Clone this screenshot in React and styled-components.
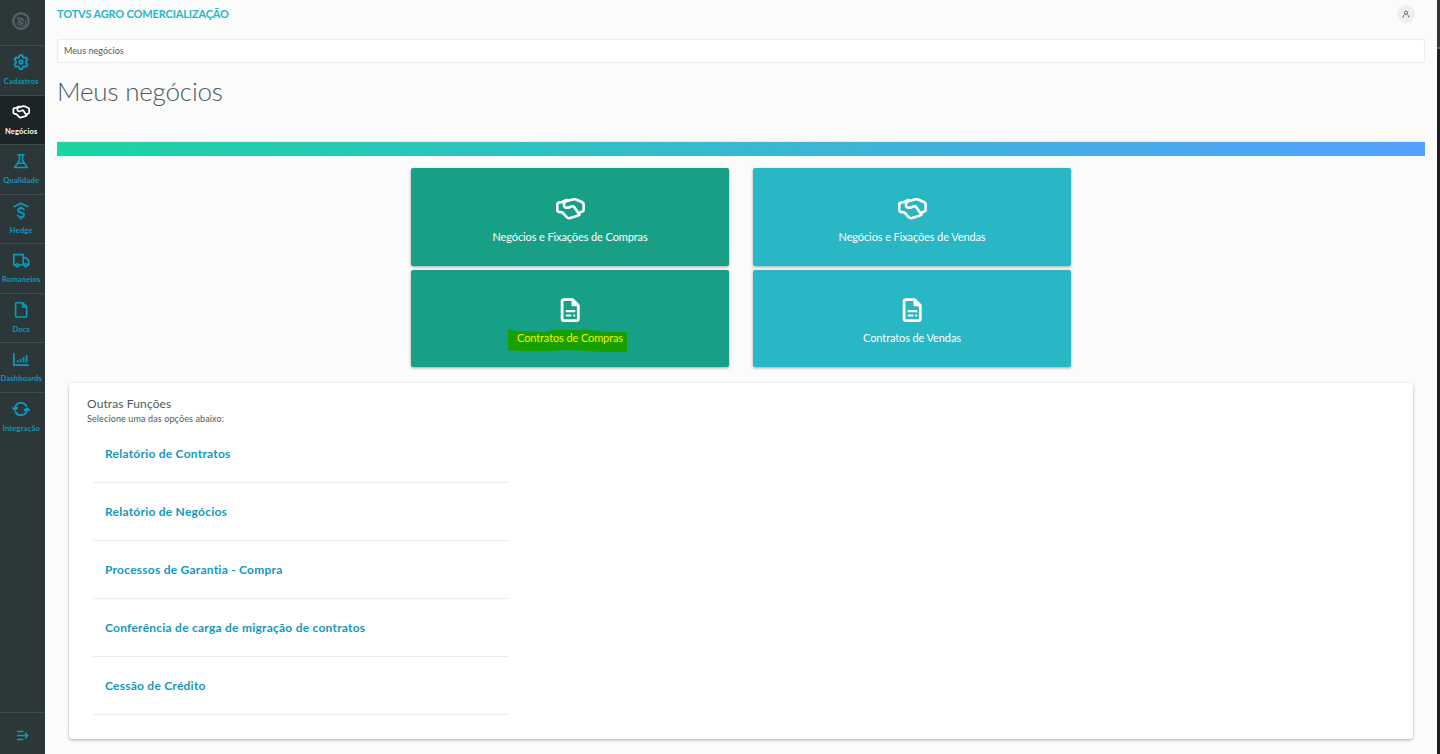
import React from 'react';
import styled, { createGlobalStyle } from 'styled-components';

const GlobalStyle = createGlobalStyle`
  * {
    box-sizing: border-box;
  }
  body {
    margin: 0;
    overflow: hidden;
    background: #fbfbfb;
    font-family: Lato, 'Open Sans', sans-serif;
    color: #4a5c60;
  }
`;

const Page = styled.div`
  display: flex;
  width: 100%;
  height: 754px;
`;

const Sidebar = styled.nav`
  display: flex;
  flex-direction: column;
  flex: none;
  width: 45px;
  background: #2c3739;
`;
const Brand = styled.div`
  display: flex;
  align-items: center;
  justify-content: center;
  height: 46px;
  padding: 0 3px 3px 0;
  border-bottom: 1px solid #3f4c4f;
`;
const MenuItem = styled.a`
  display: flex;
  flex-direction: column;
  align-items: center;
  height: 49.5px;
  padding: 7px 3px 0 0;
  border-bottom: 1px solid ${p => (p.$last ? 'transparent' : '#3f4c4f')};
  color: ${p => (p.$active ? '#ffffff' : '#0c9abe')};
  background: ${p => (p.$active ? '#1d2426' : 'transparent')};
  svg {
    flex: none;
    width: 18px;
    height: 18px;
  }
`;
const MenuLabel = styled.span`
  margin-top: 6.4px;
  padding-left: 0.5px;
  font-size: 7.5px;
  line-height: 10px;
  font-weight: 700;
  letter-spacing: 0.2px;
  white-space: nowrap;
`;
const Collapse = styled.div`
  display: flex;
  align-items: center;
  justify-content: center;
  height: 42px;
  margin-top: auto;
  padding-top: 4px;
  border-top: 1px solid #3f4c4f;
  color: #0c9abe;
`;

const Main = styled.main`
  flex: 1;
  min-width: 0;
  padding: 0 12px;
`;
const Header = styled.header`
  display: flex;
  align-items: center;
  justify-content: space-between;
  height: 28px;
  padding-right: 10px;
`;
const Product = styled.span`
  padding-bottom: 2px;
  font-size: 11px;
  font-weight: 700;
  letter-spacing: -0.15px;
  color: #29b6c5;
`;
const Avatar = styled.span`
  display: flex;
  align-items: center;
  justify-content: center;
  width: 18px;
  height: 18px;
  border-radius: 50%;
  background: #eeeeee;
`;
const Breadcrumb = styled.div`
  height: 24px;
  margin-top: 11px;
  padding-left: 6px;
  border: 1px solid #ececec;
  border-radius: 2px;
  background: #fff;
  font-size: 9px;
  line-height: 22px;
  letter-spacing: 0.05px;
`;
const Title = styled.h1`
  height: 36px;
  margin: 10px 0 0;
  font-size: 26px;
  font-weight: 300;
  line-height: 36px;
  letter-spacing: -0.2px;
`;
const Gradient = styled.div`
  height: 15px;
  margin-top: 32px;
  border-top: 1px solid #eeeeee;
  background: linear-gradient(90deg, #1dd3a1, #549fff) padding-box;
`;

const Cards = styled.div`
  display: grid;
  grid-template-columns: 318px 318px;
  grid-template-rows: 98px 97px;
  justify-content: center;
  gap: 4px 24px;
  margin-top: 12px;
`;
const Card = styled.a`
  display: flex;
  flex-direction: column;
  align-items: center;
  padding-top: ${p => p.$top}px;
  border-radius: 2px;
  background: ${p => p.$color};
  color: #fff;
  box-shadow: 0 1px 3px rgba(0, 0, 0, 0.35);
`;
const CardLabel = styled.span`
  position: relative;
  z-index: 0;
  margin-top: ${p => p.$gap}px;
  font-size: 11px;
  line-height: 14px;
  letter-spacing: -0.11px;
  color: ${p => (p.$marked ? '#f2f200' : '#fff')};
`;
const Marker = styled.svg`
  position: absolute;
  z-index: -1;
  left: 50%;
  top: -2px;
  margin-left: -62px;
`;

const Panel = styled.section`
  height: 356px;
  margin: 16px 12px 0;
  padding: 13px 18px 0;
  border-radius: 3px;
  background: #fff;
  box-shadow: 0 1px 3px rgba(0, 0, 0, 0.32);
`;
const PanelTitle = styled.h2`
  margin: 0;
  font-size: 12px;
  font-weight: 400;
  line-height: 16px;
  letter-spacing: 0.12px;
`;
const PanelHint = styled.p`
  margin: 1px 0 0;
  font-size: 9px;
  line-height: 12px;
  letter-spacing: 0.12px;
`;
const List = styled.ul`
  width: 416px;
  margin: 0 0 0 6px;
  padding: 0;
  list-style: none;
`;
const ListItem = styled.li`
  height: 58px;
  padding: 19px 12px 0;
  border-bottom: 1px solid #ececec;
  color: #1397bd;
  font-size: 12px;
  font-weight: 700;
  line-height: 20px;
  letter-spacing: 0.24px;
`;

const Edge = styled.aside`
  flex: none;
  width: 3px;
  border-top: 47px solid #333333;
  background: #1f1f23;
`;
const EdgeNotch = styled.div`
  height: 2px;
  background: #66666a;
`;

const Icon = ({ size = 18, width = 1.9, box = 20, children }) => (
  <svg
    width={size}
    height={size}
    viewBox={`0 0 ${box} ${box}`}
    fill="none"
    stroke="currentColor"
    strokeWidth={width}
    strokeLinejoin="round"
    strokeLinecap="round"
  >
    {children}
  </svg>
);

const Gear = () => (
  <Icon width={2}>
    <path d="M7.900 4.600 8.500 2.400h3l.6 2.200 1.300.8 2.300-.6 1.600 2.700L15.700 9.200v1.900l1.600 1.600-1.600 2.700-2.300-.6-1.300.8-.6 2.200h-3l-.6-2.200-1.300-.8-2.300.6-1.600-2.700 1.600-1.600V9.200L2.700 7.500l1.600-2.700 2.300.6z" />
    <circle cx="10" cy="10.100" r="1.900" />
  </Icon>
);
const Handshake = ({ size, width = 2.600 }) => (
  <Icon size={size} width={width} box={30}>
    <path d="M14 6.500 11.500 6 7 8l-3.400.6Q2.300 9 2.300 10.500V16q0 1.600 1.300 1.900l3.800.6 4.400 4.700q1.300 1.400 3.200.9l7.700-2.400 2.600-3.400 2.200-.8q1.100-.4 1.100-1.800v-5.400q0-1.500-1.300-2L21 5.500q-1.200-.5-2.300-.2L11 7.300Q9.200 8 9.100 9.700L9 11.500q.2 2.200 2.600 2.300 1.600 0 3-.5l2.900-1.200 1.500.7 5.500 8" />
  </Icon>
);
const Flask = () => (
  <Icon width={1.700}>
    <path d="M6.500 3h7M8.200 3v6.500L2.800 17.300h14.400L11.800 9.500V3M6.500 12.500h7" />
  </Icon>
);
const Hedge = () => (
  <Icon width={2}>
    <path d="M2.500 5 10 1.600 17.500 5M13.300 8.500c-.7-1.200-2-1.600-3.300-1.600-1.900 0-3.200 1-3.200 2.500 0 3.400 6.600 1.600 6.600 5 0 1.500-1.400 2.500-3.400 2.500-1.500 0-2.800-.6-3.500-1.800M10 5.500V7M10 17v1.700" />
  </Icon>
);
const Truck = () => (
  <Icon width={1.800}>
    <path d="M4 15.500H2V4h10.500v11.500H7.500M12.500 7.500h3l3 3.500v4.500h-1.500M12.500 15.500h1" />
    <circle cx="5.700" cy="15.800" r="1.600" />
    <circle cx="15.300" cy="15.800" r="1.600" />
  </Icon>
);
const Sheet = () => (
  <Icon width={1.800}>
    <path d="M5 2h7l4.200 4.200v10.600q0 1-1 1H5q-1 0-1-1V3q0-1 1-1zM11.800 2.300v4.200h4" />
  </Icon>
);
const Chart = () => (
  <Icon>
    <path d="M2 3.500v13.200h16.500M6.300 14v-2.500M9.600 14v-4M12.900 14V8M16.200 14V5.500" strokeLinecap="butt" />
  </Icon>
);
const Sync = () => (
  <Icon width={2}>
    <path d="M3.400 9.500a6.700 6.700 0 0 1 12.600-2.800M16.600 10.500A6.700 6.700 0 0 1 4 13.300M.9 8.800 3.400 11l2.400-2.400M14.200 11.400 16.700 9l2.400 2.400" />
  </Icon>
);
const Contract = () => (
  <svg width="22" height="26" viewBox="0 0 22 26" fill="none" stroke="#fff" strokeWidth="2.800" strokeLinejoin="round">
    <path d="M5 2.600h8.500l5.800 5.600v13.600q0 1.900-1.900 1.900H5q-1.900 0-1.900-1.900V4.500q0-1.900 1.900-1.900z" />
    <path d="M13.200 3v5.600h5.600z" fill="#fff" strokeWidth="1.400" />
    <path d="M6.800 14.200h9.400M6.800 18.500h5.500M14.200 18.500h2" strokeWidth="2.200" />
  </svg>
);

const menu = [
  { label: 'Cadastros', icon: <Gear /> },
  { label: 'Negócios', icon: <Handshake width={3} />, active: true },
  { label: 'Qualidade', icon: <Flask /> },
  { label: 'Hedge', icon: <Hedge /> },
  { label: 'Romaneios', icon: <Truck /> },
  { label: 'Docs', icon: <Sheet /> },
  { label: 'Dashboards', icon: <Chart /> },
  { label: 'Integração', icon: <Sync /> }
];

const options = [
  'Relatório de Contratos',
  'Relatório de Negócios',
  'Processos de Garantia - Compra',
  'Conferência de carga de migração de contratos',
  'Cessão de Crédito'
];

const App = () => (
  <Page>
    <GlobalStyle />
    <Sidebar>
      <Brand>
        <svg width="18" height="18" viewBox="0 0 18 18" fill="none" stroke="#536064">
          <circle cx="9" cy="9" r="7.800" strokeWidth="2.400" />
          <path d="M4 4.800 11.500 6v6.500L8.500 12 6 9.800V7z" fill="#536064" stroke="none" />
          <path d="M6 9.500v3l7.500 1.500V7.500" strokeWidth="1.200" />
          <path d="m7.200 6.800 3.800 3.800" stroke="#2c3739" strokeWidth="1.200" />
        </svg>
      </Brand>
      {menu.map((item, i) => (
        <MenuItem key={item.label} $active={item.active} $last={i === menu.length - 1}>
          {item.icon}
          <MenuLabel>{item.label}</MenuLabel>
        </MenuItem>
      ))}
      <Collapse>
        <svg width="13" height="11" viewBox="0 0 13 11" fill="none" stroke="currentColor" strokeWidth="1.400">
          <path d="M1 1.500h6.500M1 5.500h10.500M1 9.500h6.500M9 2.700l2.900 2.800L9 8.300" />
        </svg>
      </Collapse>
    </Sidebar>
    <Main>
      <Header>
        <Product>TOTVS AGRO COMERCIALIZAÇÃO</Product>
        <Avatar>
          <svg width="8" height="8" viewBox="0 0 8 8" fill="none" stroke="#5b6468">
            <circle cx="4" cy="2.700" r="1.600" />
            <path d="M1 7.500q.2-2 1.800-3M7 7.500q-.2-2-1.800-3" />
          </svg>
        </Avatar>
      </Header>
      <Breadcrumb>Meus negócios</Breadcrumb>
      <Title>Meus negócios</Title>
      <Gradient />
      <Cards>
        <Card $color="#18a086" $top={26}>
          <Handshake size={30} />
          <CardLabel $gap={6}>Negócios e Fixações de Compras</CardLabel>
        </Card>
        <Card $color="#29b6c5" $top={26}>
          <Handshake size={30} />
          <CardLabel $gap={6}>Negócios e Fixações de Vendas</CardLabel>
        </Card>
        <Card $color="#18a086" $top={27}>
          <Contract />
          <CardLabel $gap={8} $marked>
            <Marker width="120" height="24" viewBox="0 0 120 24">
              <path d="M0 0 8 2l30 1 8-2h38l14 2h21v20H92l-10-1-26-1-12 1H12L0 21z" fill="#17a000" />
            </Marker>
            Contratos de Compras
          </CardLabel>
        </Card>
        <Card $color="#29b6c5" $top={27}>
          <Contract />
          <CardLabel $gap={8}>Contratos de Vendas</CardLabel>
        </Card>
      </Cards>
      <Panel>
        <PanelTitle>Outras Funções</PanelTitle>
        <PanelHint>Selecione uma das opções abaixo:</PanelHint>
        <List>
          {options.map(option => (
            <ListItem key={option}>{option}</ListItem>
          ))}
        </List>
      </Panel>
    </Main>
    <Edge>
      <EdgeNotch />
    </Edge>
  </Page>
);

export default App;
